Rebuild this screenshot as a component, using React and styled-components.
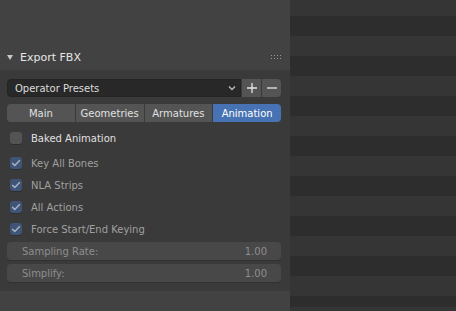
import React from 'react';
import styled, { createGlobalStyle } from 'styled-components';

const GlobalStyle = createGlobalStyle`
  html, body {
    margin: 0;
    padding: 0;
    background: #424242;
  }
  * { box-sizing: border-box; }
`;

const tabs = ['Main', 'Geometries', 'Armatures', 'Animation'];
const checks = ['Key All Bones', 'NLA Strips', 'All Actions', 'Force Start/End Keying'];
const fields = [
  { label: 'Sampling Rate:', value: '1.00' },
  { label: 'Simplify:', value: '1.00' }
];

export default function App() {
  return (
    <Screen>
      <GlobalStyle />
      <Sidebar>
        <Header>
          <Arrow viewBox="0 0 6 5">
            <path d="M0 0 L6 0 L3 5 Z" fill="#c9c9c9" />
          </Arrow>
          <HeaderTitle>Export FBX</HeaderTitle>
          <Grip viewBox="0 0 10 5">
            {[0, 1].map(r => [0, 1, 2, 3].map(c => (
              <rect key={r + '-' + c} x={c * 3} y={r * 3} width="1" height="1" fill="#9a9a9a" />
            )))}
          </Grip>
        </Header>
        <Body>
          <PresetRow>
            <Select>
              <span>Operator Presets</span>
              <svg width="8" height="6" viewBox="0 0 8 6">
                <path d="M1 1.5 L4 4.5 L7 1.5" stroke="#bdbdbd" strokeWidth="1.3" fill="none" />
              </svg>
            </Select>
            <IconButton>
              <svg width="10" height="10" viewBox="0 0 10 10">
                <path d="M5 0 V10 M0 5 H10" stroke="#e6e6e6" strokeWidth="1.3" />
              </svg>
            </IconButton>
            <IconButton $last>
              <svg width="10" height="10" viewBox="0 0 10 10">
                <path d="M0 5 H10" stroke="#e6e6e6" strokeWidth="1.3" />
              </svg>
            </IconButton>
          </PresetRow>
          <Tabs>
            {tabs.map((t, i) => (
              <Tab key={t} $active={t === 'Animation'} $first={i === 0} $last={i === tabs.length - 1}>
                {t}
              </Tab>
            ))}
          </Tabs>
          <CheckRow $main>
            <Box />
            <CheckLabel $main>Baked Animation</CheckLabel>
          </CheckRow>
          <CheckList>
            {checks.map(c => (
              <CheckRow key={c}>
                <Box $checked>
                  <svg width="10" height="8" viewBox="0 0 10 8">
                    <path d="M1.2 4 L3.8 6.4 L8.8 1.2" stroke="#a9b3c4" strokeWidth="1.5" fill="none" />
                  </svg>
                </Box>
                <CheckLabel>{c}</CheckLabel>
              </CheckRow>
            ))}
          </CheckList>
          <Fields>
            {fields.map(f => (
              <NumField key={f.label}>
                <span>{f.label}</span>
                <span>{f.value}</span>
              </NumField>
            ))}
          </Fields>
        </Body>
      </Sidebar>
      <ListArea />
    </Screen>
  );
}

const Screen = styled.div`
  display: flex;
  width: 456px;
  height: 311px;
  font-family: "DejaVu Sans", "Liberation Sans", sans-serif;
  font-size: 10px;
`;

const Sidebar = styled.div`
  width: 290px;
  background: #424242;
  display: flex;
  flex-direction: column;
`;

const Header = styled.div`
  height: 70px;
  padding: 45px 9px 0 7px;
  display: flex;
  align-items: center;
`;

const Arrow = styled.svg`
  width: 6px;
  height: 5px;
  margin-right: 7px;
`;

const HeaderTitle = styled.div`
  flex: 1;
  color: #e6e6e6;
  font-size: 11px;
`;

const Grip = styled.svg`
  width: 10px;
  height: 5px;
`;

const Body = styled.div`
  background: #3a3a3a;
  height: 221px;
  padding: 9px 9px 9px 7px;
  display: flex;
  flex-direction: column;
`;

const PresetRow = styled.div`
  display: flex;
  height: 18px;
  gap: 1px;
`;

const Select = styled.div`
  flex: 1;
  display: flex;
  align-items: center;
  justify-content: space-between;
  padding: 0 4px 0 7px;
  background: #282828;
  border: 1px solid #242424;
  border-radius: 4px 0 0 4px;
  color: #dcdcdc;
`;

const IconButton = styled.div`
  width: 19px;
  display: flex;
  align-items: center;
  justify-content: center;
  background: #545454;
  border-radius: ${p => (p.$last ? '0 4px 4px 0' : '0')};
`;

const Tabs = styled.div`
  display: flex;
  gap: 1px;
  height: 18px;
  margin-top: 7px;
`;

const Tab = styled.div`
  flex: 1;
  display: flex;
  align-items: center;
  justify-content: center;
  color: ${p => (p.$active ? '#ffffff' : '#e0e0e0')};
  background: ${p => (p.$active ? '#4772b3' : '#545454')};
  border-radius: ${p => (p.$first ? '4px 0 0 4px' : p.$last ? '0 4px 4px 0' : '0')};
`;

const CheckList = styled.div`
  display: flex;
  flex-direction: column;
  margin-top: 4px;
`;

const CheckRow = styled.div`
  display: flex;
  align-items: center;
  height: ${p => (p.$main ? '20px' : '22px')};
  margin-top: ${p => (p.$main ? '6px' : '0')};
  padding-left: 3px;
`;

const Box = styled.div`
  width: 12px;
  height: 12px;
  border-radius: 3px;
  background: ${p => (p.$checked ? '#3f5476' : '#545454')};
  display: flex;
  align-items: center;
  justify-content: center;
  box-shadow: 0 1px 0 rgba(0, 0, 0, 0.2);
`;

const CheckLabel = styled.span`
  margin-left: 9px;
  color: ${p => (p.$main ? '#e0e0e0' : '#a0a0a0')};
`;

const Fields = styled.div`
  display: flex;
  flex-direction: column;
  gap: 4px;
  margin-top: 2px;
`;

const NumField = styled.div`
  height: 18px;
  display: flex;
  align-items: center;
  justify-content: space-between;
  padding: 0 14px 0 15px;
  background: #484848;
  border-radius: 4px;
  color: #8e8e8e;
  box-shadow: 0 1px 0 rgba(0, 0, 0, 0.15);
`;

const ListArea = styled.div`
  flex: 1;
  background: repeating-linear-gradient(
    to bottom,
    #353535 0px,
    #353535 20px,
    #2d2d2d 20px,
    #2d2d2d 40px
  );
  background-position: 0 -4px;
`;
